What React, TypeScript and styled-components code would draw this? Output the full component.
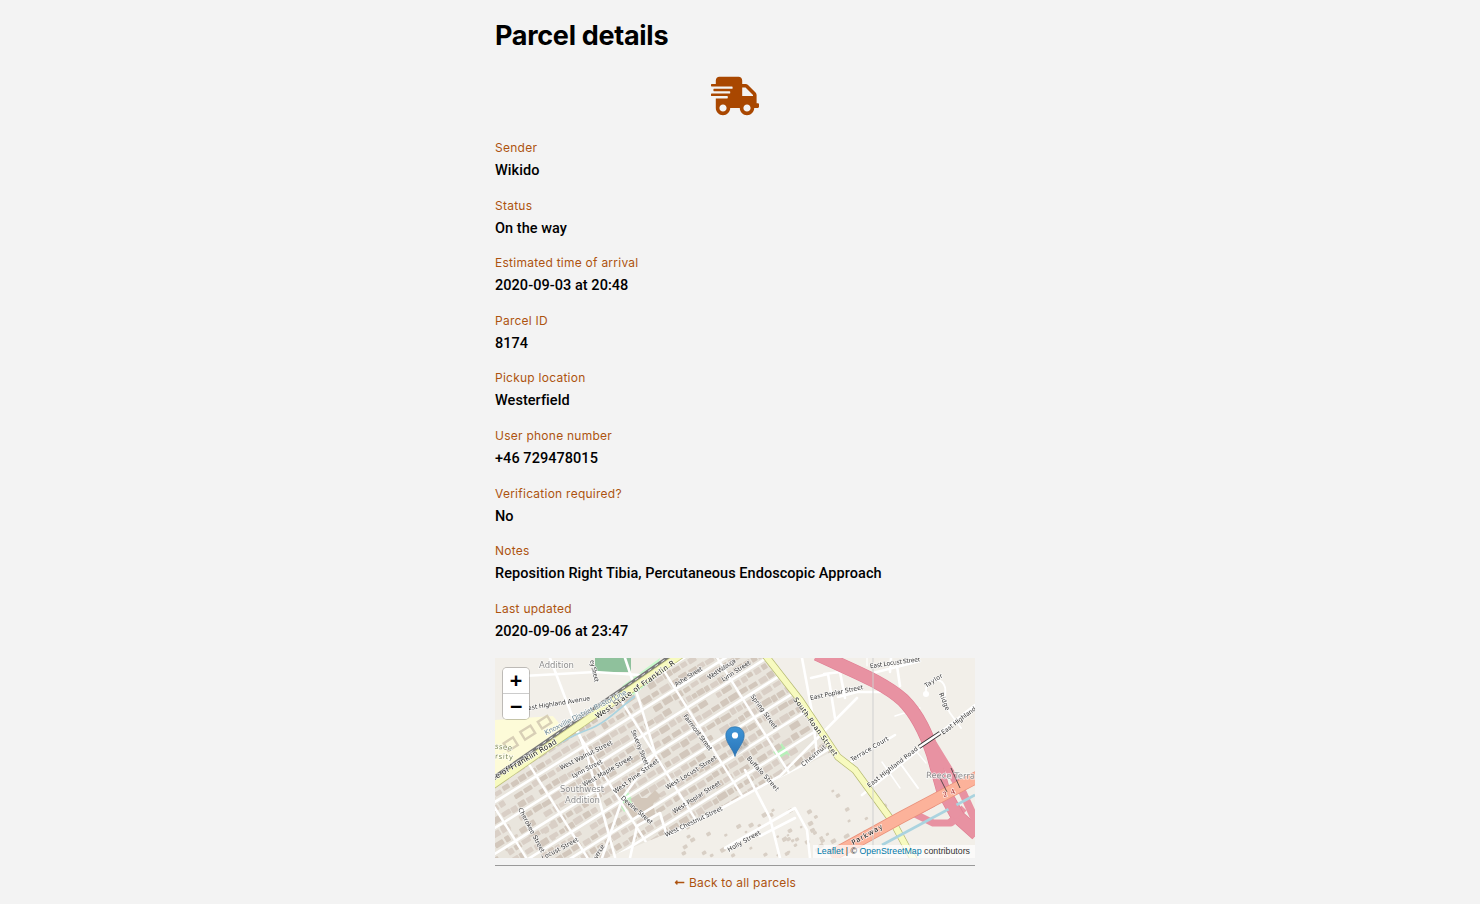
import React from "react";
import styled, { createGlobalStyle } from "styled-components";
import { FaShippingFast, FaLongArrowAltLeft } from "react-icons/fa";

const Global = createGlobalStyle`
  html, body { margin: 0; padding: 0; background: #f3f3f3; }
  body { font-family: "Inter", "Liberation Sans", sans-serif; color: #000; }
`;

const Page = styled.div`
  width: 1470px;
  height: 904px;
  overflow: hidden;
`;
const Column = styled.main`
  width: 480px;
  margin: 0 auto;
  display: flex;
  flex-direction: column;
`;
const Title = styled.h1`
  margin: 18px 0 -1px;
  font: 700 27px/36px "Inter", "Liberation Sans", sans-serif;
  letter-spacing: -0.3px;
`;
const IconRow = styled.div`
  display: flex;
  justify-content: center;
  margin: 19px 0 0;
  height: 39px;
  color: #a94700;
`;
const Fields = styled.dl`
  margin: 28px 0 0;
  display: flex;
  flex-direction: column;
`;
const Field = styled.div`
  height: 57.6px;
`;
const Label = styled.dt`
  font: 400 12px/18px "Inter", "Liberation Sans", sans-serif;
  letter-spacing: 0.25px;
  color: #ad5310;
  height: 20px;
`;
const Value = styled.dd`
  margin: 0;
  font: 500 14.5px/24px "Roboto", "Liberation Sans", sans-serif;
  letter-spacing: 0.05px;
`;
const MapFrame = styled.div`
  position: relative;
  width: 480px;
  height: 200px;
  margin-top: 1px;
  overflow: hidden;
  background: #f2efe9;
`;
const MapCanvas = styled.svg`
  display: block;
  filter: blur(0.4px);
`;
const Zoom = styled.div`
  position: absolute;
  left: 8px;
  top: 10px;
  width: 26px;
  border-radius: 4px;
  box-shadow: 0 0 0 1px rgba(0,0,0,.22);
  overflow: hidden;
`;
const ZoomButton = styled.div`
  height: 25px;
  background: #fff;
  display: flex;
  align-items: center;
  justify-content: center;
  font: 700 20px/25px "DejaVu Sans Mono", "Liberation Mono", monospace;
  color: #000;
  & + & { border-top: 1px solid #ccc; }
`;
const Pin = styled.svg`
  position: absolute;
  left: 230px;
  top: 68px;
`;
const Attribution = styled.div`
  position: absolute;
  right: 0;
  bottom: 0;
  padding: 0 5px 0 4px;
  height: 13px;
  background: rgba(255,255,255,.7);
  font: 400 8.8px/13px "Liberation Sans", Arial, sans-serif;
  color: #333;
  white-space: nowrap;
`;
const AttrLink = styled.span`
  color: #0078a8;
`;
const Rule = styled.hr`
  margin: 7px 0 0;
  border: 0;
  border-top: 1px solid #999;
  height: 0;
`;
const BackLink = styled.div`
  margin-top: 8px;
  display: flex;
  justify-content: center;
  align-items: center;
  gap: 4px;
  font: 400 12px/17px "Inter", "Liberation Sans", sans-serif;
  letter-spacing: 0.2px;
  color: #ad5310;
`;

const fields: [string, string][] = [
  ["Sender", "Wikido"],
  ["Status", "On the way"],
  ["Estimated time of arrival", "2020-09-03 at 20:48"],
  ["Parcel ID", "8174"],
  ["Pickup location", "Westerfield"],
  ["User phone number", "+46 729478015"],
  ["Verification required?", "No"],
  ["Notes", "Reposition Right Tibia, Percutaneous Endoscopic Approach"],
  ["Last updated", "2020-09-06 at 23:47"],
];

/* ---------- map drawing ---------- */
const OX = 240, OY = 100;
const D = [0.848, -0.53], N = [0.53, 0.848];
const pt = (u: number, v: number) => [OX + D[0] * u + N[0] * v, OY + D[1] * u + N[1] * v];
const rng = (seed: number) => () => {
  seed = (seed * 1664525 + 1013904223) % 4294967296;
  return seed / 4294967296;
};

const STREETS_V = [-112, -90, -68, -46, -24, -2, 20, 42, 64, 86];
const CROSS_U = [-230, -178, -120, -66, -14, 38, 92, 146, 200];

function Buildings() {
  const r = rng(7);
  const out: React.ReactNode[] = [];
  for (const v0 of STREETS_V) {
    for (const side of [6, 16]) {
      let u = -270;
      while (u < 270) {
        const w = 5 + r() * 6, h = 4.5 + r() * 2;
        if (r() > 0.1) {
          const [x, y] = pt(u + w / 2, v0 + side + (r() - 0.5) * 1.5);
          out.push(
            <rect key={out.length} x={x - w / 2} y={y - h / 2} width={w} height={h} rx={0.8}
              fill={r() < 0.5 ? "#d9cfc6" : "#d2c7bc"} transform={`rotate(-32 ${x} ${y})`} />
          );
        }
        u += w + 0.6 + r() * 1.8;
      }
    }
  }
  return <g clipPath="url(#dense)">{out}</g>;
}

function SparseBuildings() {
  const r = rng(31);
  const out: React.ReactNode[] = [];
  const zones = [[170, 150, 150, 48, 34], [330, 130, 60, 60, 10], [280, 175, 70, 22, 16], [0, 155, 60, 40, 14]];
  for (const [x0, y0, w0, h0, n] of zones) {
    for (let i = 0; i < n; i++) {
      const x = x0 + r() * w0, y = y0 + r() * h0, s = 2.5 + r() * 3;
      out.push(<rect key={out.length} x={x} y={y} width={s} height={s * 0.8} rx={1} fill="#d8cfc5" transform={`rotate(-30 ${x} ${y})`} />);
    }
  }
  return <g>{out}</g>;
}

function Lbl({ a, b, t, fill = "#333", size = 6.2 }: { a: [number, number]; b: [number, number]; t: string; fill?: string; size?: number }) {
  const ax = a[0] - 495, ay = a[1] - 658, bx = b[0] - 495, by = b[1] - 658;
  const cx = (ax + bx) / 2, cy = (ay + by) / 2;
  const ang = (Math.atan2(by - ay, bx - ax) * 180) / Math.PI;
  return (
    <text x={cx} y={cy} dy={size * 0.35} textAnchor="middle" fontFamily="DejaVu Sans, sans-serif" fontSize={size}
      fill={fill} stroke="#fff" strokeOpacity={0.75} strokeWidth={1.4} paintOrder="stroke"
      textLength={Math.hypot(bx - ax, by - ay)} lengthAdjust="spacing"
      transform={`rotate(${ang} ${cx} ${cy})`}>{t}</text>
  );
}

const white = (d: string, w = 2.6) => <path d={d} fill="none" stroke="#fff" strokeWidth={w} strokeLinecap="round" strokeLinejoin="round" />;

const MOTORWAY = "M 322 -4 C 360 14, 388 24, 408 42 C 424 58, 432 78, 438 96 L 448 132 L 463 159 L 482 176";
const BRANCH = "M 432 76 L 448 102 L 468 135 L 482 166";
const RAMP_LOW = "M 418 155 L 438 165 L 455 165 L 469 150";
const RAMP_UP = "M 420 156 L 438 146 L 450 134";
const TRUNK = "M 486 117 L 405 160 L 336 198";
const ROAN = "M 270 -3 L 305 42 L 343 99 L 360 112 L 398 164 L 413 192 L 420 203";
const FRANKLIN = "M -5 129 L 187 -4";

function MapArt() {
  return (
    <MapCanvas width={480} height={200} viewBox="0 0 480 200">
      <defs>
        <clipPath id="dense">
          <polygon points="0,128 186,0 268,0 340,92 262,132 190,168 112,200 0,200" />
        </clipPath>
      </defs>
      <rect width={480} height={200} fill="#f2efe9" />
      <polygon points="0,128 186,0 268,0 340,92 262,132 190,168 112,200 0,200" fill="#e9e5dd" />
      {/* land use */}
      <polygon points="0,30 130,0 170,0 0,118" fill="#f2efe9" />
      <polygon points="0,62 58,58 68,70 0,118" fill="#fdfbd8" />
      <rect x={100} y={0} width={36} height={14} fill="#8fc19c" />
      <polygon points="127,28 165,0 160,20 135,40" fill="#c8facc" />
      <polygon points="278,94 287,85 295,97 286,103" fill="#b7f0b9" />
      <polygon points="123,144 133,134 140,146 129,154" fill="#bff5c0" />
      <g fill="none" stroke="#d8cfb6" strokeWidth={2.4}>
        <rect x={27} y={70} width={12} height={9} transform="rotate(-32 33 75)" />
        <rect x={10} y={82} width={11} height={9} transform="rotate(-32 15 86)" />
        <rect x={44} y={60} width={11} height={8} transform="rotate(-32 50 64)" />
      </g>
      <SparseBuildings />
      <Buildings />
      <path d="M 132 150 l 10 -10 l 10 0 l 8 -8 l 6 6 l -8 8 l 2 8 l -8 6 l -8 -4 l -6 4 z" fill="#d3c7ba" />
      {/* residential streets */}
      <g clipPath="url(#dense)">
        {STREETS_V.map((v) => {
          const [x1, y1] = pt(-320, v), [x2, y2] = pt(320, v);
          return <line key={v} x1={x1} y1={y1} x2={x2} y2={y2} stroke="#fff" strokeWidth={2.6} />;
        })}
        {CROSS_U.map((u) => {
          const [x1, y1] = pt(u, -140), [x2, y2] = pt(u, 110);
          return <line key={u} x1={x1} y1={y1} x2={x2} y2={y2} stroke="#fff" strokeWidth={2.4} />;
        })}
      </g>
      {/* other streets */}
      {white("M 28 18 L 100 14 L 160 18 M 55 0 L 92 97 L 120 199")}
      {white("M 130 0 L 145 45 L 160 95 L 128 139 L 107 200")}
      {white("M 135 200 L 142 168 L 165 155 L 172 178 L 227 150 L 285 118 L 362 40")}
      {white("M 307 0 L 317 54 L 322 96")}
      {white("M 316 20 L 333 16 L 340 60 M 329 16 L 345 14 L 350 40 M 343 39 L 362 34 L 400 34")}
      {white("M 370 17 L 425 3 M 395 14 L 396 0 M 402 8 L 405 28")}
      {white("M 356 104 L 400 77")}
      {white("M 367 137 L 480 47")}
      {white("M 431 34 C 430 24, 440 18, 447 24 C 455 32, 445 40, 455 55 L 466 70", 1.8)}
      <circle cx={431} cy={36} r={3} fill="#fff" />
      {white("M 405 130 L 387 104 M 400 58 L 425 50", 1.5)}
      {white("M 250 112 L 275 160 L 285 200", 2.6)}
      {white("M 230 190 L 300 150 L 312 172 L 315 200 M 265 178 L 300 160")}
      {white("M 431 105 L 421 93 M 372 0 L 372 8", 1.2)}
      {white("M 405 105 L 423 130", 2)}
      {/* stream & rail */}
      <path d="M 32 100 C 60 90, 70 80, 92 72 C 110 66, 125 50, 140 38" fill="none" stroke="#aad3df" strokeWidth={1.8} />
      {/* yellow roads */}
      <path d="M -5 122 L 178 -4" fill="none" stroke="#777" strokeWidth={3.4} />
      <path d="M -5 122 L 178 -4" fill="none" stroke="#ddd" strokeWidth={1} strokeDasharray="4 4" />
      <path d={FRANKLIN} fill="none" stroke="#bdc07a" strokeWidth={8} />
      <path d={FRANKLIN} fill="none" stroke="#f7fabf" strokeWidth={6.6} />
      <path d={ROAN} fill="none" stroke="#b6ba72" strokeWidth={7.4} />
      <path d={ROAN} fill="none" stroke="#f7fabf" strokeWidth={6} />
      {/* motorway */}
      <g fill="none">
        <path d={RAMP_LOW} stroke="#e892a2" strokeWidth={7} />
        <path d={RAMP_UP} stroke="#e892a2" strokeWidth={6} />
        <path d={MOTORWAY} stroke="#df7d92" strokeWidth={14} />
        <path d={BRANCH} stroke="#e892a2" strokeWidth={8} />
        <path d={MOTORWAY} stroke="#e892a2" strokeWidth={12.8} />
        <path d="M 387 187 L 480 137" stroke="#aad3df" strokeWidth={2.6} />
        <path d="M 455 165 L 463 159" stroke="#e892a2" strokeWidth={8} />
        <path d="M 448 132 L 463 159" stroke="#e892a2" strokeWidth={9} />
      </g>
      {/* trunk */}
      <path d={TRUNK} fill="none" stroke="#e8907a" strokeWidth={12.4} />
      <path d={TRUNK} fill="none" stroke="#fcb29a" strokeWidth={11} />
      {/* bridges */}
      <path d="M 424 89 L 445 75" stroke="#333" strokeWidth={4} />
      <path d="M 424 89 L 445 75" stroke="#fff" strokeWidth={2.4} />
      <path d="M 443 116 L 452 134 M 456 110 L 465 130" stroke="#333" strokeWidth={0.8} />
      {/* tile seam */}
      <line x1={378} y1={0} x2={378} y2={200} stroke="#cfcfcf" strokeWidth={1} />
      {/* labels */}
      <Lbl a={[539, 665]} b={[574, 665]} t="Addition" fill="#8e8e8e" size={8.5} />
      <Lbl a={[596, 717]} b={[674, 662]} t="West State of Franklin R" fill="#222" size={7.4} />
      <Lbl a={[493, 778]} b={[556, 741]} t="te of Franklin Road" fill="#222" size={7.4} />
      <Lbl a={[545, 733]} b={[626, 692]} t="Knoxville District Bristol Line" fill="#6f8a95" size={7} />
      <Lbl a={[528, 708]} b={[590, 698]} t="est Highland Avenue" />
      <Lbl a={[495, 746]} b={[512, 748]} t="ssee" fill="#7e8a58" size={7} />
      <Lbl a={[495, 756]} b={[513, 757]} t="rsity" fill="#7e8a58" size={7} />
      <Lbl a={[560, 768]} b={[612, 742]} t="West Walnut Street" />
      <Lbl a={[572, 776]} b={[602, 761]} t="Lynn Street" />
      <Lbl a={[583, 785]} b={[632, 757]} t="West Maple Street" />
      <Lbl a={[614, 792]} b={[658, 760]} t="West Pine Street" />
      <Lbl a={[666, 788]} b={[716, 757]} t="West Locust Street" />
      <Lbl a={[673, 812]} b={[720, 782]} t="West Poplar Street" />
      <Lbl a={[665, 835]} b={[722, 808]} t="West Chestnut Street" />
      <Lbl a={[728, 850]} b={[760, 832]} t="Holly Street" />
      <Lbl a={[520, 808]} b={[543, 852]} t="Cherokee Street" />
      <Lbl a={[542, 858]} b={[578, 839]} t="Locust Street" />
      <Lbl a={[622, 797]} b={[652, 823]} t="Devine Street" />
      <Lbl a={[633, 730]} b={[647, 765]} t="Seventy Street" />
      <Lbl a={[685, 715]} b={[711, 750]} t="Fairmont Street" />
      <Lbl a={[675, 685]} b={[702, 668]} t="Ashe Street" />
      <Lbl a={[708, 678]} b={[735, 660]} t="West Watauga" />
      <Lbl a={[722, 680]} b={[750, 662]} t="Lynn Street" />
      <Lbl a={[592, 660]} b={[597, 682]} t="ey Street" />
      <Lbl a={[748, 757]} b={[778, 790]} t="Buffalo Street" />
      <Lbl a={[752, 695]} b={[776, 728]} t="Spring Street" />
      <Lbl a={[795, 698]} b={[836, 755]} t="South Roan Street" fill="#222" size={6.8} />
      <Lbl a={[802, 765]} b={[825, 746]} t="Chestnut" />
      <Lbl a={[810, 698]} b={[863, 687]} t="East Poplar Street" />
      <Lbl a={[870, 666]} b={[920, 659]} t="East Locust Street" />
      <Lbl a={[851, 760]} b={[888, 738]} t="Terrace Court" />
      <Lbl a={[868, 786]} b={[917, 748]} t="East Highland Road" />
      <Lbl a={[942, 733]} b={[975, 708]} t="East Highland" />
      <Lbl a={[925, 686]} b={[942, 675]} t="Taylor" />
      <Lbl a={[941, 693]} b={[948, 710]} t="Ridge" />
      <Lbl a={[926, 775]} b={[975, 776]} t="Reece Terra" fill="#8e8e8e" size={8.5} />
      <Lbl a={[852, 843]} b={[882, 826]} t="Parkway" fill="#222" size={7} />
      <Lbl a={[943, 795]} b={[955, 791]} t="24" fill="#a33" size={7} />
      <Lbl a={[595, 858]} b={[603, 845]} t="venue" />
      <Lbl a={[560, 789]} b={[604, 789]} t="Southwest" fill="#8e8e8e" size={8.5} />
      <Lbl a={[565, 800]} b={[600, 800]} t="Addition" fill="#8e8e8e" size={8.5} />
    </MapCanvas>
  );
}

export default function App() {
  return (
    <Page>
      <Global />
      <Column>
        <Title>Parcel details</Title>
        <IconRow><FaShippingFast size={48} /></IconRow>
        <Fields>
          {fields.map(([l, v]) => (
            <Field key={l}>
              <Label>{l}</Label>
              <Value>{v}</Value>
            </Field>
          ))}
        </Fields>
        <MapFrame>
          <MapArt />
          <Zoom>
            <ZoomButton>+</ZoomButton>
            <ZoomButton>−</ZoomButton>
          </Zoom>
          <Pin width={34} height={34} viewBox="0 0 34 34">
            <defs>
              <linearGradient id="pinGrad" x1="0" y1="0" x2="0" y2="1">
                <stop offset="0" stopColor="#3f95d6" />
                <stop offset="1" stopColor="#2a74b8" />
              </linearGradient>
            </defs>
            <path d="M10 31 L24 20 L19 15 Z" fill="#000" opacity={0.12} />
            <path d="M10 30.5 C8.6 24 0.8 17 0.8 9.6 C0.8 4.2 4.8 0.8 10 0.8 C15.2 0.8 19.2 4.2 19.2 9.6 C19.2 17 11.4 24 10 30.5 Z" fill="url(#pinGrad)" stroke="#2a6fa8" strokeWidth={0.7} />
            <circle cx={10} cy={9.4} r={3.1} fill="#fff" />
          </Pin>
          <Attribution>
            <AttrLink>Leaflet</AttrLink> | © <AttrLink>OpenStreetMap</AttrLink> contributors
          </Attribution>
        </MapFrame>
        <Rule />
        <BackLink><FaLongArrowAltLeft size={11} />Back to all parcels</BackLink>
      </Column>
    </Page>
  );
}
